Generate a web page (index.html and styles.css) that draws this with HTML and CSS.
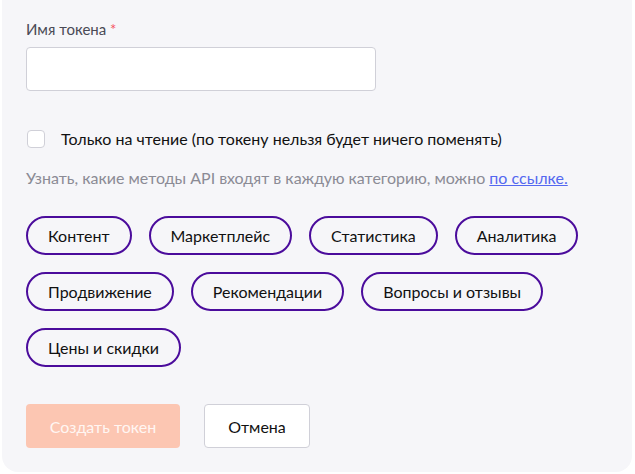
FILE: index.html
```html
<!DOCTYPE html>
<html lang="ru">

<head>
    <meta charset="UTF-8">
    <title>Создать токен</title>
    <link rel="stylesheet" href="styles.css">
</head>

<body>

    <form class="card">

        <label class="field-label" for="token-name">Имя токена <span class="req">*</span></label>
        <input class="text-input" id="token-name" type="text">

        <label class="check-row">
            <span class="check-box"></span>
            <span class="check-text">Только на чтение (по токену нельзя будет ничего поменять)</span>
        </label>

        <p class="hint">Узнать, какие методы API входят в каждую категорию, можно <a href="#">по ссылке.</a></p>

        <div class="chips">
            <span class="chip">Контент</span>
            <span class="chip">Маркетплейс</span>
            <span class="chip">Статистика</span>
            <span class="chip">Аналитика</span>
            <span class="chip">Продвижение</span>
            <span class="chip">Рекомендации</span>
            <span class="chip">Вопросы и отзывы</span>
            <span class="chip">Цены и скидки</span>
        </div>

        <div class="actions">
            <button class="btn btn-primary" type="button" disabled>Создать токен</button>
            <button class="btn btn-secondary" type="button">Отмена</button>
        </div>

    </form>

</body>
</html>
```

FILE: styles.css
```css
body {
    margin: 0;
    background-color: #ffffff;
    font-family: Lato, "Noto Sans", sans-serif;
}

.card {
    display: flex;
    flex-direction: column;
    align-items: flex-start;
    box-sizing: border-box;
    width: 630px;
    height: 472px;
    margin-left: 2px;
    padding: 20px 24px 0 24px;
    background-color: #f6f6f9;
    border-radius: 0 0 16px 16px;
}

.field-label {
    font-size: 15px;
    color: #4a4a55;
    line-height: 18px;
}

.req {
    color: #f5515f;
}

.text-input {
    box-sizing: border-box;
    width: 350px;
    height: 44px;
    margin-top: 9px;
    border: 1px solid #d0d0d8;
    border-radius: 4px;
    background: #fff;
}

.check-row {
    display: flex;
    align-items: center;
    margin-top: 38px;
    margin-left: 1px;
}

.check-box {
    box-sizing: border-box;
    width: 18px;
    height: 18px;
    border: 1px solid #d0d0d8;
    border-radius: 4px;
    background: #fff;
}

.check-text {
    margin-left: 16px;
    font-size: 16px;
    color: #111;
}

.hint {
    margin: 20px 0 0 0;
    font-size: 16px;
    color: #8b8b95;
}

.hint a {
    color: #5468f0;
}

.chips {
    display: flex;
    flex-wrap: wrap;
    gap: 17px 17px;
    width: 580px;
    margin-top: 29px;
}

.chip {
    box-sizing: border-box;
    height: 39px;
    padding: 0 20px;
    border: 2px solid #4b0c9c;
    border-radius: 20px;
    font-size: 16px;
    line-height: 35px;
    color: #111;
    white-space: nowrap;
}

.actions {
    display: flex;
    gap: 24px;
    margin-top: 37px;
}

.btn {
    box-sizing: border-box;
    height: 44px;
    border-radius: 4px;
    font-family: inherit;
    font-size: 16px;
    padding: 0;
    white-space: nowrap;
}

.btn-primary {
    width: 154px;
    border: none;
    background-color: #fcc6b2;
    color: #fff6f2;
}

.btn-secondary {
    width: 106px;
    border: 1px solid #d0d0d8;
    background-color: #fff;
    color: #111;
}
```
